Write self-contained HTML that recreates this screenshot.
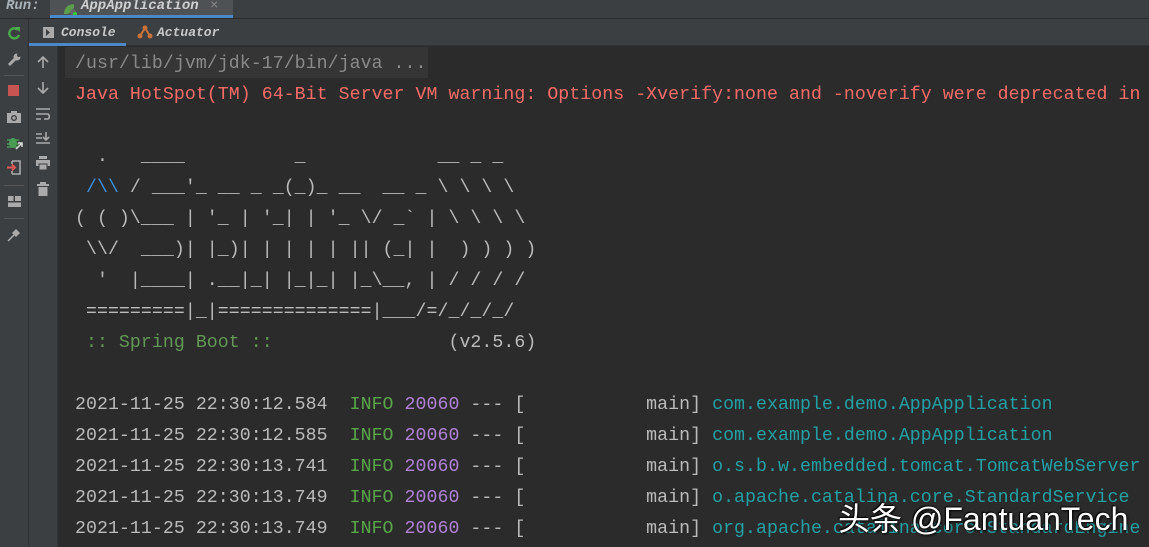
<!DOCTYPE html>
<html><head><meta charset="utf-8"><style>
body{margin:0;width:1149px;height:547px;overflow:hidden;background:#2b2b2b;font-family:"Liberation Sans",sans-serif;position:relative}
.top{position:absolute;left:0;top:0;width:1149px;height:18px;background:#3c3f41;border-bottom:1px solid #2b2b2b;overflow:hidden}
.top .run{position:absolute;left:6px;top:-2px;color:#a9b1b8;font:italic bold 14px "Liberation Mono",monospace}
.top .tab{position:absolute;left:50px;top:0;width:183px;height:18px;background:#4e5254}
.top .tab span{position:absolute;left:31px;top:-2px;color:#d0d0d0;font:italic bold 14px "Liberation Mono",monospace}
.top .tab .x{left:160px;color:#888;font-style:normal;font-weight:normal}
.top .tab .ul{position:absolute;left:0;bottom:0;width:183px;height:3px;background:#4a88c7}
.lc{position:absolute;left:0;top:19px;width:28px;height:528px;background:#3c3f41;border-right:1px solid #323232}
.lc2{position:absolute;left:29px;top:46px;width:28px;height:501px;background:#3c3f41;border-right:1px solid #323232}
.tabs{position:absolute;left:29px;top:19px;width:1120px;height:26px;background:#3c3f41;border-bottom:1px solid #323232}
.tabs .c{position:absolute;left:0;top:0;width:97px;height:26px;}
.tabs .c .ul{position:absolute;left:0;bottom:-1px;width:97px;height:3px;background:#4a88c7}
.tabs span{position:absolute;top:6px;color:#c8c8c8;font:italic bold 13px "Liberation Mono",monospace}
.con{position:absolute;left:75px;top:49px;width:1074px;overflow:hidden;font:18.2px/31px "Liberation Mono",monospace;letter-spacing:0.07px;color:#bbbbbb;white-space:pre}
.hl{position:absolute;left:65px;top:47px;width:363px;height:31px;background:#353535}
.r{color:#ff6b68}.g{color:#629755}.i{color:#5aa54a}.p{color:#b081d6}.t{color:#22a0a4}.b{color:#3d8fe0}.gr{color:#8a8a8a}
.wm{position:absolute;left:838px;top:494px;color:#fff;font:32px "Liberation Sans","Noto Sans CJK SC",sans-serif;text-shadow:1px 1px 2px #000,-1px -1px 1px #000}
</style></head><body>
<div class="top"><span class="run">Run:</span>
<div class="tab"><svg style="position:absolute;left:12px;top:2px" width="16" height="14"><path d="M2 12 Q2 3 12 2 Q13 10 5 12Z" fill="#5a9e4b"/><circle cx="11" cy="10" r="3" fill="#666"/><circle cx="13" cy="12" r="2" fill="#3c3"/></svg><span>AppApplication</span><span class="x">×</span><div class="ul"></div></div></div>
<div class="tabs"><div class="c"><svg style="position:absolute;left:14px;top:8px" width="11" height="11"><rect width="11" height="11" fill="#aaa"/><path d="M3 2 L7 5.5 L3 9Z" fill="#3c3f41"/></svg><span style="left:32px">Console</span><div class="ul"></div></div>
<svg style="position:absolute;left:108px;top:6px" width="16" height="14"><path d="M3 11 L8 3 L13 11" stroke="#c9713b" stroke-width="2" fill="none"/><circle cx="3" cy="11" r="2.5" fill="#c9713b"/><circle cx="8" cy="3" r="2.5" fill="#c9713b"/><circle cx="13" cy="11" r="2.5" fill="#c9713b"/></svg><span style="left:128px">Actuator</span></div>
<div class="lc">
<svg style="position:absolute;left:7px;top:7px" width="14" height="14"><path d="M11 4 A5 5 0 1 0 12 9" stroke="#4aaa4a" stroke-width="2.4" fill="none"/><path d="M8 1 L13 1 L13 6Z" fill="#4aaa4a"/></svg>
<svg style="position:absolute;left:7px;top:34px" width="14" height="14"><path d="M2 12 L8 6" stroke="#aaa" stroke-width="3"/><circle cx="10" cy="4" r="3.5" fill="#aaa"/><circle cx="12" cy="2" r="2" fill="#3c3f41"/></svg>
<div style="position:absolute;left:4px;top:56px;width:20px;height:1px;background:#555"></div>
<div style="position:absolute;left:8px;top:66px;width:11px;height:11px;background:#c75450"></div>
<svg style="position:absolute;left:7px;top:92px" width="14" height="12"><rect y="2" width="14" height="10" fill="#aaa"/><rect x="4" width="6" height="3" fill="#aaa"/><circle cx="7" cy="7" r="3" fill="#3c3f41"/><circle cx="7" cy="7" r="1.6" fill="#aaa"/></svg>
<svg style="position:absolute;left:7px;top:116px" width="16" height="16"><ellipse cx="6" cy="8" rx="4" ry="5" fill="#499c54"/><path d="M0 5h12M0 9h12M0 12h12" stroke="#499c54" stroke-width="1.5"/><path d="M9 14 L15 8 M11 8h4v4" stroke="#ddd" stroke-width="1.5" fill="none"/></svg>
<svg style="position:absolute;left:7px;top:141px" width="14" height="15"><path d="M5 1h8v13h-8M5 1v3M5 14v-3" stroke="#aaa" stroke-width="1.6" fill="none"/><path d="M0 7.5h8M5 4.5l3 3-3 3" stroke="#e05555" stroke-width="2" fill="none"/></svg>
<div style="position:absolute;left:4px;top:166px;width:20px;height:1px;background:#555"></div>
<svg style="position:absolute;left:8px;top:177px" width="13" height="11"><rect width="5.5" height="5" fill="#aaa"/><rect x="7" width="6" height="5" fill="#aaa"/><rect y="6.5" width="13" height="4.5" fill="#aaa"/></svg>
<div style="position:absolute;left:4px;top:199px;width:20px;height:1px;background:#555"></div>
<svg style="position:absolute;left:7px;top:209px" width="14" height="14"><path d="M1 13 L7 7" stroke="#aaa" stroke-width="1.5"/><path d="M5 5 L9 1 L13 5 L9 9Z" fill="#aaa"/></svg>
</div>
<div class="lc2">
<svg style="position:absolute;left:8px;top:9px" width="12" height="14"><path d="M6 13V2M1 7l5-5 5 5" stroke="#aaa" stroke-width="1.6" fill="none"/></svg>
<svg style="position:absolute;left:8px;top:35px" width="12" height="14"><path d="M6 1v11M1 7l5 5 5-5" stroke="#aaa" stroke-width="1.6" fill="none"/></svg>
<svg style="position:absolute;left:7px;top:61px" width="14" height="14"><path d="M0 2h14M0 7h12a3 3 0 0 1 0 5h-4M0 12h5" stroke="#aaa" stroke-width="1.6" fill="none"/></svg>
<svg style="position:absolute;left:7px;top:85px" width="14" height="14"><path d="M0 3h6M0 7h6M0 12h14M10 1v8M7 6l3 3 3-3" stroke="#aaa" stroke-width="1.6" fill="none"/></svg>
<svg style="position:absolute;left:7px;top:110px" width="14" height="14"><rect x="3" width="8" height="3" fill="#aaa"/><rect y="4" width="14" height="6" fill="#aaa"/><rect x="3" y="8" width="8" height="6" fill="#aaa" stroke="#3c3f41"/></svg>
<svg style="position:absolute;left:8px;top:136px" width="12" height="14"><rect x="3" width="6" height="2" fill="#aaa"/><rect y="2" width="12" height="2" fill="#aaa"/><rect x="1.5" y="5" width="9" height="9" fill="#aaa"/></svg>
</div>
<div class="hl"></div>
<div class="con"><span class="gr">/usr/lib/jvm/jdk-17/bin/java ...</span>
<span class="r">Java HotSpot(TM) 64-Bit Server VM warning: Options -Xverify:none and -noverify were deprecated in JDK 13</span>

  .   ____          _            __ _ _
 <span class="b">/\\</span> / ___'_ __ _ _(_)_ __  __ _ \ \ \ \
( ( )\___ | '_ | '_| | '_ \/ _` | \ \ \ \
 \\/  ___)| |_)| | | | | || (_| |  ) ) ) )
  '  |____| .__|_| |_|_| |_\__, | / / / /
 =========|_|==============|___/=/_/_/_/
<span class="g"> :: Spring Boot :: </span>               (v2.5.6)

2021-11-25 22:30:12.584  <span class="i">INFO</span> <span class="p">20060</span> --- [           main] <span class="t">com.example.demo.AppApplication</span>
2021-11-25 22:30:12.585  <span class="i">INFO</span> <span class="p">20060</span> --- [           main] <span class="t">com.example.demo.AppApplication</span>
2021-11-25 22:30:13.741  <span class="i">INFO</span> <span class="p">20060</span> --- [           main] <span class="t">o.s.b.w.embedded.tomcat.TomcatWebServer</span>
2021-11-25 22:30:13.749  <span class="i">INFO</span> <span class="p">20060</span> --- [           main] <span class="t">o.apache.catalina.core.StandardService</span>
2021-11-25 22:30:13.749  <span class="i">INFO</span> <span class="p">20060</span> --- [           main] <span class="t">org.apache.catalina.core.StandardEngine</span></div>
<div class="wm">头条 @FantuanTech</div>
</body></html>
